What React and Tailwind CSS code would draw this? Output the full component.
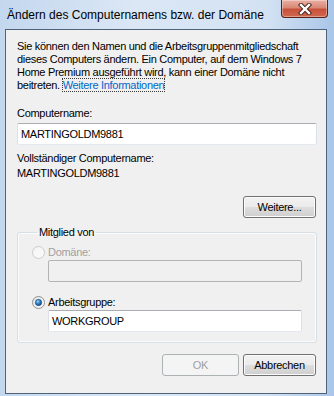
import React from 'react';

const RadioDot = ({ checked, disabled }) => (
  <svg width="13" height="13" viewBox="0 0 13 13" className="shrink-0">
    <defs>
      <linearGradient id={checked ? 'rg1' : 'rg0'} x1="0" y1="0" x2="1" y2="1">
        <stop offset="0" stopColor={disabled ? '#f4f4f4' : '#e6e6e6'} />
        <stop offset="1" stopColor={disabled ? '#fbfbfb' : '#ffffff'} />
      </linearGradient>
      <radialGradient id="rdot" cx="0.4" cy="0.35" r="0.7">
        <stop offset="0" stopColor="#9fd3fa" />
        <stop offset="0.5" stopColor="#2a7ec4" />
        <stop offset="1" stopColor="#0d3f7a" />
      </radialGradient>
    </defs>
    <circle cx="6.5" cy="6.5" r="6" fill={`url(#${checked ? 'rg1' : 'rg0'})`} stroke={disabled ? '#c9cbcc' : '#8e8f8f'} strokeWidth="1" />
    {checked && <circle cx="6.5" cy="6.5" r="3.2" fill="url(#rdot)" stroke="#1d4f80" strokeWidth="0.6" />}
  </svg>
);

const WinButton = ({ children, disabled, width }) => (
  <button
    type="button"
    disabled={disabled}
    className={`h-[22px] ${width} rounded-[3px] border text-[11px] leading-none tracking-[-0.3px] ${
      disabled
        ? 'border-[#adb2b5] bg-[#f4f4f4] text-[#a0a0a0]'
        : 'border-[#707070] bg-[linear-gradient(#f2f2f2_0%,#ebebeb_48%,#dddddd_52%,#cfcfcf_100%)] text-black shadow-[inset_0_0_0_1px_#fcfcfc]'
    }`}
  >
    {children}
  </button>
);

const TextBox = ({ value, disabled, className }) => (
  <div
    className={`h-[22px] rounded-[2px] border px-[3px] flex items-center text-[11px] ${
      disabled
        ? 'border-[#b4b4b4] bg-[#f0f0f0]'
        : 'border-[#dbdfe6] border-t-[#abadb3] border-b-[#e3e9ef] bg-white'
    } ${className}`}
  >
    {value}
  </div>
);

export default function App() {
  return (
    <div
      className="w-[334px] h-[396px] overflow-hidden bg-[linear-gradient(90deg,#c3d7ee_0%,#dbe7f5_40%,#d3e2f3_80%,#a9c6e8_100%)]"
      style={{ fontFamily: '"Liberation Sans", Arial, sans-serif' }}
    >
      {/* title bar */}
      <div className="h-[29px] flex justify-between">
        <div className="pl-[7px] pt-[7px] text-[12px] leading-[16px] text-black">
          Ändern des Computernamens bzw. der Domäne
        </div>
        <div className="mr-[6px] w-[47px] h-[18px] rounded-b-[4px] border border-t-0 border-[#5a2019] bg-[linear-gradient(#eab0a4_0%,#d98874_45%,#c8503a_55%,#cf6a4f_100%)] shadow-[inset_0_0_0_1px_rgba(255,255,255,0.35)] flex items-center justify-center">
          <svg width="14" height="12" viewBox="0 0 14 12">
            <path d="M3 2 L11 10 M11 2 L3 10" stroke="#4a241c" strokeWidth="4.4" strokeLinecap="square" />
            <path d="M3 2 L11 10 M11 2 L3 10" stroke="#ffffff" strokeWidth="2.4" strokeLinecap="square" />
          </svg>
        </div>
      </div>

      {/* client area */}
      <div className="ml-[5px] w-[322px] h-[365px] border border-[#4e637a] bg-[#f0f0f0] pl-[11px] pr-[10px] pt-[10px] text-[11px] tracking-[-0.3px] text-black">
        <p className="leading-[13px] whitespace-nowrap">
          Sie können den Namen und die Arbeitsgruppenmitgliedschaft
          <br />
          dieses Computers ändern. Ein Computer, auf dem Windows 7
          <br />
          Home Premium ausgeführt wird, kann einer Domäne nicht
          <br />
          beitreten.{' '}
          <span className="text-[#0066cc] outline outline-1 outline-dotted outline-[#3a3a3a]">Weitere Informationen</span>
        </p>

        <div className="mt-[15px] leading-[13px]">Computername:</div>
        <TextBox value="MARTINGOLDM9881" className="mt-[3px] w-[300px]" />

        <div className="mt-[7px] leading-[13px]">Vollständiger Computername:</div>
        <div className="mt-[2px] leading-[13px]">MARTINGOLDM9881</div>

        <div className="mt-[16px] flex justify-end w-[299px]">
          <WinButton width="w-[73px]">Weitere...</WinButton>
        </div>

        <fieldset className="mt-[8px] w-[300px] rounded-[3px] border border-[#d5dfe5] shadow-[inset_0_0_0_1px_#fcfcfc] pl-[14px] pb-[10px]">
          <legend className="ml-[5px] px-[2px] leading-[13px]">Mitglied von</legend>

          <div className="mt-[7px] flex items-center gap-[3px] h-[13px]">
            <RadioDot disabled />
            <span className="text-[#a0a0a0] leading-[13px]">Domäne:</span>
          </div>
          <TextBox disabled value="" className="mt-[1px] ml-[16px] w-[254px]" />

          <div className="mt-[14px] flex items-center gap-[3px] h-[13px]">
            <RadioDot checked />
            <span className="leading-[13px]">Arbeitsgruppe:</span>
          </div>
          <TextBox value="WORKGROUP" className="mt-[1px] ml-[16px] w-[254px]" />
        </fieldset>

        <div className="mt-[11px] flex justify-end gap-[4px] w-[299px]">
          <WinButton disabled width="w-[77px]">OK</WinButton>
          <WinButton width="w-[73px]">Abbrechen</WinButton>
        </div>
      </div>
    </div>
  );
}
